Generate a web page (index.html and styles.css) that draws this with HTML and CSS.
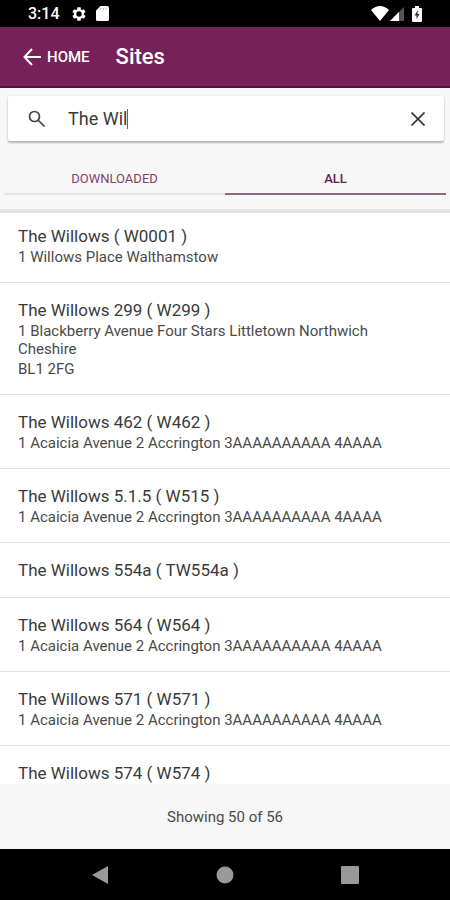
FILE: index.html
```html
<!DOCTYPE html>
<html lang="en">
<head>
<meta charset="utf-8">
<meta name="viewport" content="width=device-width, initial-scale=1">
<title>Sites</title>
<link rel="stylesheet" href="styles.css">
</head>
<body>
<div class="status">
  <span class="clock">3:14</span>
  <svg class="gear" width="16" height="16" viewBox="0 0 24 24" fill="#fff"><path d="M19.4 13a7.500 7.500 0 0 0 0-2l2.100-1.600a.5.5 0 0 0 .1-.6l-2-3.500a.5.5 0 0 0-.6-.2l-2.500 1a7.300 7.300 0 0 0-1.700-1L14.500 2.400A.5.5 0 0 0 14 2h-4a.5.5 0 0 0-.5.400L9.200 5.100a7.300 7.300 0 0 0-1.700 1l-2.500-1a.5.5 0 0 0-.6.2l-2 3.500a.5.5 0 0 0 .1.600L4.600 11a7.500 7.500 0 0 0 0 2l-2.100 1.600a.5.5 0 0 0-.1.600l2 3.500c.1.200.4.300.6.200l2.500-1a7.300 7.300 0 0 0 1.700 1l.3 2.700c0 .2.300.4.500.4h4c.3 0 .5-.2.500-.4l.3-2.700a7.300 7.300 0 0 0 1.700-1l2.500 1c.2.100.5 0 .6-.2l2-3.500a.5.5 0 0 0-.1-.6zM12 16a4 4 0 1 1 0-8 4 4 0 0 1 0 8z"/></svg>
  <svg class="card" width="13" height="15" viewBox="0 0 13 15"><path d="M4.500 0H11.500Q13 0 13 1.500V13.500Q13 15 11.500 15H1.500Q0 15 0 13.500V4.500Z" fill="#fff"/><path d="M5 2v2M7.500 2v2M10 2v2" stroke="#bbb"/></svg>
  <span class="spacer"></span>
  <svg class="wifi" width="18" height="15" viewBox="0 0 18 15"><path d="M0 4Q9-4 18 4L9 15Z" fill="#fff"/></svg>
  <svg class="signal" width="14" height="14" viewBox="0 0 14 14"><path d="M14 0V14H0Z" fill="#555"/><path d="M9 5V14H0Z" fill="#fff"/></svg>
  <svg width="10" height="16" viewBox="0 0 10 16"><path d="M3 0h4v2h2q1 0 1 1v12q0 1-1 1H1q-1 0-1-1V3q0-1 1-1h2z" fill="#fff"/><path d="M6 4L2.500 9.500H4.500V13L7.500 8H5.500Z" fill="#333"/></svg>
</div>
<header class="bar">
  <button class="home" type="button">
    <svg width="18" height="18" viewBox="0 0 18 18" fill="none" stroke="#fff" stroke-width="2"><path d="M9 1L1.500 9L9 17M1.500 9H18"/></svg>
    HOME
  </button>
  <h1>Sites</h1>
</header>
<section class="tools">
  <div class="search">
    <svg width="18" height="18" viewBox="0 0 18 18" fill="none" stroke="#444" stroke-width="1.700"><circle cx="6.500" cy="6.500" r="5"/><path d="M10.500 10.500L16.500 16.500"/></svg>
    <div class="field">
      <input type="text" aria-label="Search sites" value="The Wil">
      <span class="caret"></span>
    </div>
    <button class="clear" type="button" aria-label="Clear search"><svg width="14" height="14" viewBox="0 0 14 14" fill="none" stroke="#333" stroke-width="1.600"><path d="M.5.5L13.500 13.500M13.500.5L.5 13.500"/></svg></button>
  </div>
  <nav class="tabs">
    <button type="button">DOWNLOADED</button>
    <button type="button" class="active">ALL</button>
  </nav>
</section>
<main>
  <ul class="list">
    <li><h2>The Willows ( W0001 )</h2><p>1 Willows Place Walthamstow</p></li>
    <li><h2>The Willows 299 ( W299 )</h2><p>1 Blackberry Avenue Four Stars Littletown Northwich Cheshire</p><p>BL1 2FG</p></li>
    <li><h2>The Willows 462 ( W462 )</h2><p>1 Acaicia Avenue 2 Accrington 3AAAAAAAAAA 4AAAA</p></li>
    <li><h2>The Willows 5.1.5 ( W515 )</h2><p>1 Acaicia Avenue 2 Accrington 3AAAAAAAAAA 4AAAA</p></li>
    <li><h2>The Willows 554a ( TW554a )</h2></li>
    <li><h2>The Willows 564 ( W564 )</h2><p>1 Acaicia Avenue 2 Accrington 3AAAAAAAAAA 4AAAA</p></li>
    <li><h2>The Willows 571 ( W571 )</h2><p>1 Acaicia Avenue 2 Accrington 3AAAAAAAAAA 4AAAA</p></li>
    <li><h2>The Willows 574 ( W574 )</h2></li>
  </ul>
</main>
<footer class="count">Showing 50 of 56</footer>
<div class="nav">
  <button type="button" aria-label="Back"><svg width="18" height="18" viewBox="0 0 18 18"><path d="M17 0V18L1 9Z" fill="#999"/></svg></button>
  <button type="button" aria-label="Home"><svg width="18" height="18" viewBox="0 0 18 18"><circle cx="9" cy="9" r="8.500" fill="#999"/></svg></button>
  <button type="button" aria-label="Recent apps"><svg width="18" height="18" viewBox="0 0 18 18"><rect width="18" height="18" rx="1" fill="#999"/></svg></button>
</div>
</body>
</html>
```
FILE: styles.css
```css
* { box-sizing: border-box; }
body {
  margin: 0;
  height: 100vh;
  display: flex;
  flex-direction: column;
  overflow: hidden;
  background: #fff;
  color: #3a3a3a;
  font-family: Roboto, "Liberation Sans", sans-serif;
}
button {
  padding: 0;
  border: 0;
  background: none;
  font: inherit;
  color: inherit;
}
svg { display: block; flex: none; }
h1, h2, p, ul { margin: 0; padding: 0; font-weight: 400; }
.status {
  flex: none;
  display: flex;
  align-items: center;
  height: 27px;
  padding: 0 28px;
  background: #000;
  color: #fff;
  font-size: 16px;
  font-weight: 500;
}
.gear { margin-left: 11px; }
.card { margin-left: 9px; }
.spacer { flex: 1; }
.signal { margin: 0 8px 0 1px; }
.bar {
  flex: none;
  display: flex;
  align-items: center;
  gap: 26px;
  height: 61px;
  padding: 0 23px;
  background: #762159;
  border-bottom: 2px solid #650645;
  color: #fff;
}
.home {
  display: flex;
  align-items: center;
  gap: 6px;
  font-size: 15px;
  font-weight: 500;
}
h1 { font-size: 22px; line-height: 28px; font-weight: 500; }
.tools {
  flex: none;
  padding: 8px 4px 14px;
  background: #f7f7f7;
}
.search {
  display: flex;
  align-items: center;
  height: 45px;
  margin: 0 2px 0 4px;
  padding: 0 19px 0 20px;
  background: #fff;
  border-radius: 2px;
  box-shadow: 0 2px 2px rgba(0, 0, 0, .25), 0 0 2px rgba(0, 0, 0, .1);
}
.field {
  flex: 1;
  min-width: 0;
  display: flex;
  align-items: center;
  margin-left: 22px;
}
input {
  field-sizing: content;
  max-width: 100%;
  padding: 0;
  border: 0;
  outline: 0;
  background: none;
  color: #3a3a3a;
  font: inherit;
  font-size: 18px;
}
.caret { width: 1px; height: 20px; background: #666; }
.tabs {
  display: grid;
  grid-template-columns: 1fr 1fr;
  margin-top: 22px;
}
.tabs button {
  height: 32px;
  padding-top: 2px;
  border-bottom: 2px solid #e8e4e6;
  color: #86406c;
  font-size: 13px;
  line-height: 24px;
}
.tabs .active {
  border-color: #8c6b7f;
  color: #6b1b4f;
  font-weight: 500;
}
main {
  flex: 1;
  min-height: 0;
  overflow: hidden;
  box-shadow: inset 0 4px 0 #e4e4e4;
}
.list { list-style: none; }
li {
  padding: 16px 36px 16px 18px;
  border-bottom: 1px solid #e2e2e2;
}
li:last-child { border-bottom: 0; }
h2 { font-size: 17px; line-height: 22px; }
p { margin-top: 1px; font-size: 15px; line-height: 18px; color: #4a4a4a; }
p + p { margin-top: 2px; }
.count {
  flex: none;
  height: 65px;
  background: #f7f7f7;
  color: #4a4a4a;
  font-size: 15px;
  line-height: 66px;
  text-align: center;
}
.nav {
  flex: none;
  display: flex;
  justify-content: center;
  align-items: center;
  gap: 107px;
  height: 51px;
  background: #000;
}
```
